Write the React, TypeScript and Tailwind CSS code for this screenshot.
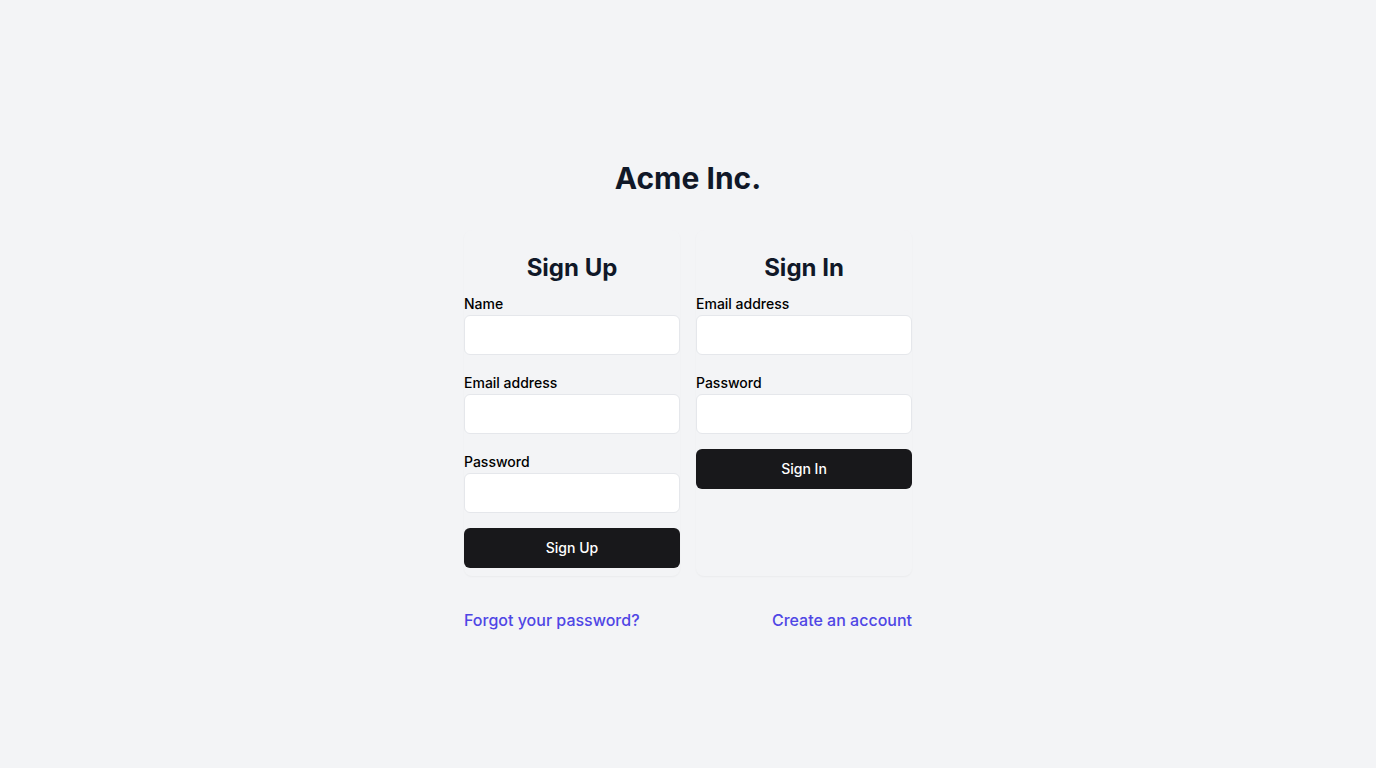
import React from "react";

function Field({ label, type = "text" }: { label: string; type?: string }) {
  return (
    <div>
      <label className="block text-sm font-medium leading-5 text-black">{label}</label>
      <input
        type={type}
        className="mt-px block h-10 w-full rounded-md border border-gray-200 bg-white px-3 text-sm outline-none"
      />
    </div>
  );
}

function AuthCard({ title, fields, action }: { title: string; fields: { label: string; type?: string }[]; action: string }) {
  return (
    <div className="rounded-lg bg-gray-100 pt-[22px] pb-2 shadow-[0_1px_2px_rgba(0,0,0,0.04)]">
      <h2 className="text-center text-2xl font-bold leading-8 text-gray-900">{title}</h2>
      <div className="mt-[10px] flex flex-col gap-[18px]">
        {fields.map(f => (
          <Field key={f.label} label={f.label} type={f.type} />
        ))}
      </div>
      <button className="mt-[15px] h-10 w-full rounded-md bg-[#18181b] text-sm font-medium text-white">{action}</button>
    </div>
  );
}

export default function App() {
  return (
    <div className="min-h-screen bg-gray-100 pt-40 font-['Inter',sans-serif]">
      <div className="mx-auto w-[448px]">
        <h1 className="text-center text-3xl font-bold leading-9 text-gray-900">Acme Inc.</h1>
        <div className="mt-[34px] grid grid-cols-2 gap-4">
          <AuthCard
            title="Sign Up"
            fields={[{ label: "Name" }, { label: "Email address", type: "email" }, { label: "Password", type: "password" }]}
            action="Sign Up"
          />
          <AuthCard
            title="Sign In"
            fields={[{ label: "Email address", type: "email" }, { label: "Password", type: "password" }]}
            action="Sign In"
          />
        </div>
        <div className="mt-8 flex justify-between text-base font-medium leading-6">
          <a href="#" className="text-[#4f46e5]">Forgot your password?</a>
          <a href="#" className="text-[#4f46e5]">Create an account</a>
        </div>
      </div>
    </div>
  );
}
